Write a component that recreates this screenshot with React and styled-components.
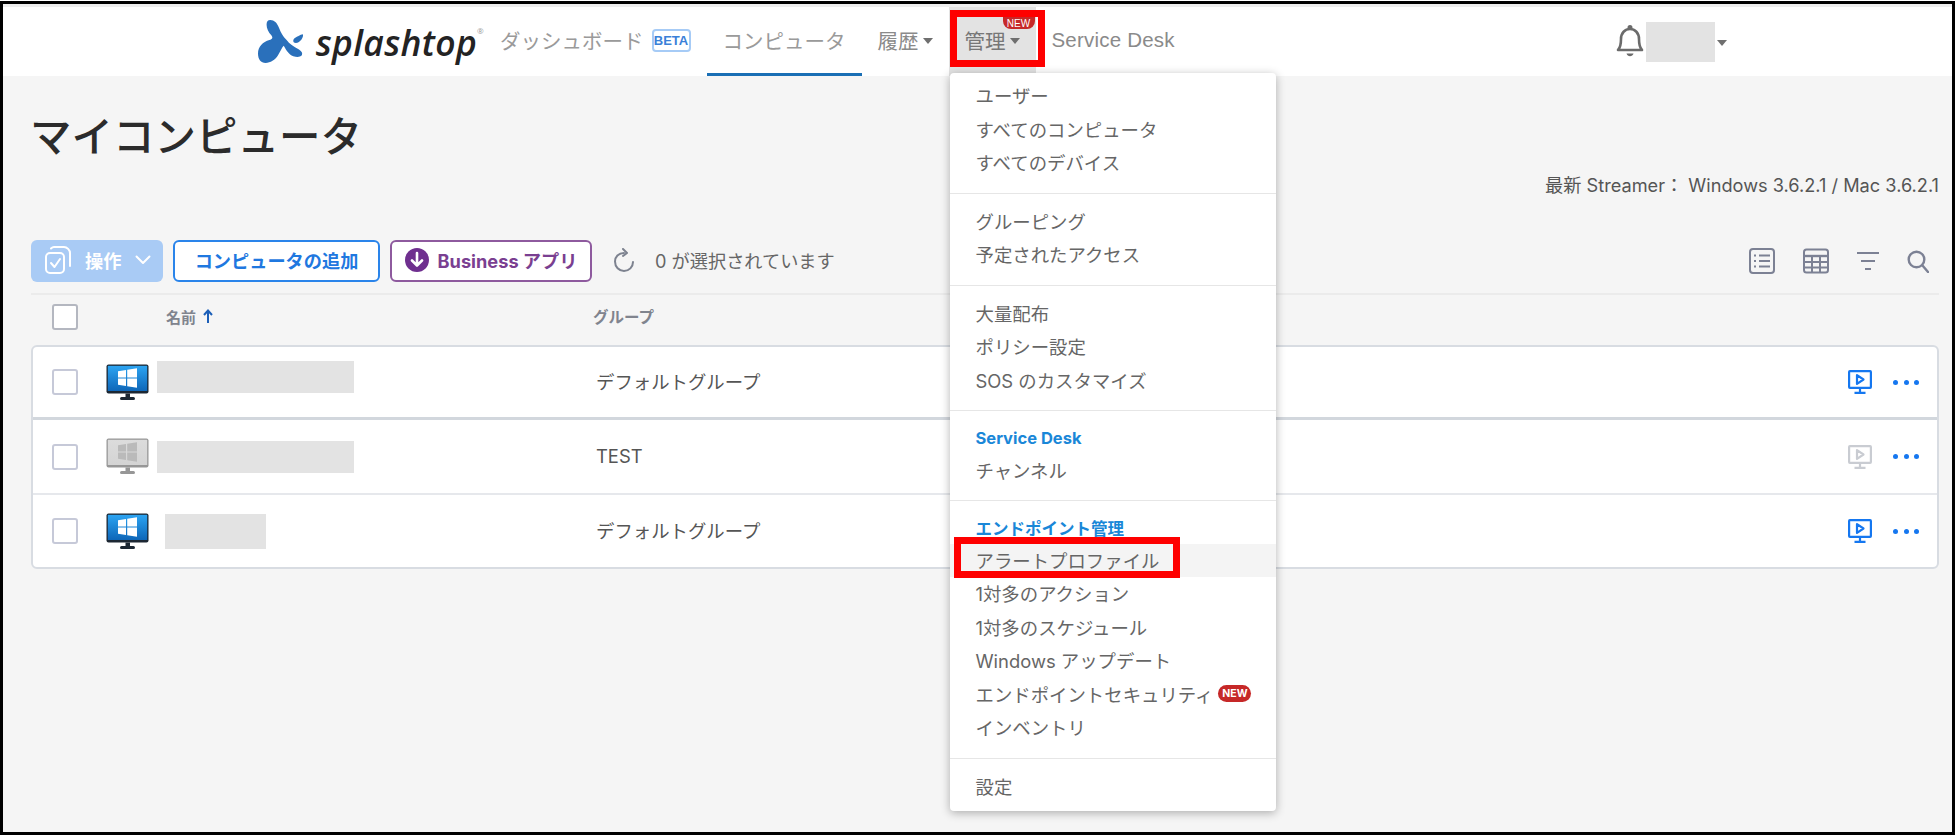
import React from "react";
import styled, { createGlobalStyle } from "styled-components";

const JP = `"Noto Sans CJK JP", sans-serif`;
const SANS = `Inter, "Noto Sans CJK JP", sans-serif`;

const GlobalStyle = createGlobalStyle`
  html, body { margin: 0; padding: 0; background: #fff; }
  * { box-sizing: border-box; }
`;

// black frame drawn around the whole capture
const Frame = styled.div`
  position: relative;
  width: 1955px;
  height: 834px;
  margin-top: 1px;
  border: 3px solid #000;
  background: #f5f5f5;
  overflow: hidden;
  font-family: ${SANS};
  color: #555;
`;

// Top navigation
const Header = styled.header`
  display: flex;
  align-items: stretch;
  height: 72px;
  padding: 0 225px 0 255px;
  background: #fff;
  border-top: 3px solid #eee;
`;

const Logo = styled.div`
  display: flex;
  align-items: center;
  gap: 12px;
  width: 226px;
  flex-shrink: 0;
`;

const LogoText = styled.span`
  font-family: "Open Sans", sans-serif;
  font-style: italic;
  font-weight: 600;
  font-size: 35.5px;
  letter-spacing: 0.3px;
  line-height: 1;
  color: #232323;
  position: relative;
  top: 1px;
`;

const LogoMark = styled.sup`
  font-size: 8px;
  color: #999;
  vertical-align: 22px;
  font-style: normal;
  font-weight: 400;
  line-height: 0;
`;

const NavItem = styled.div`
  position: relative;
  display: flex;
  align-items: center;
  gap: 4px;
  padding: 0 16px 3px;
  font-family: "Liberation Sans", ${JP};
  font-size: 20.5px;
  letter-spacing: ${(p) => p.$track || 0}px;
  color: ${(p) => p.$color || "#9a9a9a"};
  background: ${(p) => (p.$open ? "#e3e3e3" : "transparent")};
  white-space: nowrap;

  &::after {
    content: ${(p) => (p.$current ? '""' : "none")};
    position: absolute;
    left: 0;
    right: 0;
    bottom: 0;
    height: 3px;
    background: #1a6fb5;
  }
`;

const BetaBadge = styled.span`
  margin-left: 4px;
  padding: 0 4px;
  height: 23px;
  width: 39px;
  display: flex;
  align-items: center;
  justify-content: center;
  border: 2px solid #a6cbf6;
  border-radius: 4px;
  font-size: 13px;
  font-weight: 700;
  color: #3a80d8;
`;

const Caret = styled.span`
  width: 0;
  height: 0;
  margin-top: 2px;
  border-left: 5.5px solid transparent;
  border-right: 5.5px solid transparent;
  border-top: 6px solid #6f6f6f;
`;

const NewFlag = styled.span`
  position: absolute;
  top: 10px;
  right: 1px;
  width: 32px;
  height: 12px;
  display: flex;
  align-items: center;
  justify-content: center;
  background: #c62828;
  color: #fff;
  font-size: 10px;
  border-radius: 0 0 8px 8px;
`;

const Highlight = styled.span`
  position: absolute;
  left: ${(p) => p.$x}px;
  top: ${(p) => p.$y}px;
  width: ${(p) => p.$w}px;
  height: ${(p) => p.$h}px;
  border: 7px solid #fe0000;
  z-index: 6;
  pointer-events: none;
`;

const UserArea = styled.div`
  margin-left: auto;
  display: flex;
  align-items: center;
  gap: 2px;
`;

const Redacted = styled.div`
  width: ${(p) => p.$w}px;
  height: ${(p) => p.$h}px;
  margin-bottom: ${(p) => p.$lift || 0}px;
  margin-left: ${(p) => p.$indent || 0}px;
  background: #e3e3e3;
`;

// Dropdown
const Menu = styled.div`
  position: absolute;
  left: 1px;
  top: 66px;
  width: 326px;
  height: 738px;
  background: #fff;
  border-radius: 4px;
  box-shadow: 0 2px 10px rgba(0, 0, 0, 0.3);
  z-index: 5;
  font-family: ${SANS};
  letter-spacing: 0;
`;

const MenuGroup = styled.div`
  padding: ${(p) => p.$top || 11}px 0 ${(p) => p.$bottom || 13}px;
  border-bottom: ${(p) => (p.$last ? "none" : "1px solid #e6e6e6")};
`;

const MenuItem = styled.div`
  position: relative;
  display: flex;
  align-items: center;
  height: 33.5px;
  padding: 0 0 1px 26px;
  font-size: 18.4px;
  color: #666;
  background: ${(p) => (p.$active ? "#f4f4f4" : "transparent")};
`;

const MenuHeading = styled.div`
  display: flex;
  align-items: center;
  height: 31.5px;
  padding-left: 26px;
  font-size: 16.5px;
  font-weight: 700;
  color: #1a87d8;
`;

const NewPill = styled.span`
  margin-left: 5px;
  width: 33px;
  height: 17px;
  display: flex;
  align-items: center;
  justify-content: center;
  border-radius: 9px;
  background: #c62828;
  color: #fff;
  font-size: 10.5px;
  font-weight: 700;
`;

// Page body
const Main = styled.main`
  padding: 35px 13px 0 28px;
`;

const Title = styled.h1`
  margin: 0 0 0 -1px;
  font-family: ${JP};
  font-size: 41.5px;
  font-weight: 500;
  line-height: 46px;
  color: #2b2b2b;
`;

const Versions = styled.div`
  margin-top: 16px;
  height: 24px;
  line-height: 24px;
  font-size: 18.2px;
  text-align: right;
  color: #555;
`;

const Toolbar = styled.div`
  display: flex;
  align-items: center;
  height: 55px;
  margin-top: 43px;
  padding-bottom: 11px;
  border-bottom: 2px solid #ebebeb;
`;

const BaseButton = styled.div`
  display: flex;
  align-items: center;
  height: 42px;
  margin-right: 10px;
  padding-bottom: 2px;
  border-radius: 6px;
  font-size: 18.2px;
  font-weight: 700;
`;

const ActionsButton = styled(BaseButton)`
  width: 132px;
  padding-left: 14px;
  gap: 14px;
  background: #a9cbf5;
  color: #fff;
`;

const OutlineButton = styled(BaseButton)`
  width: ${(p) => p.$w}px;
  justify-content: center;
  gap: 9px;
  background: #fff;
  color: ${(p) => p.$color};
  border: 2px solid ${(p) => p.$border};
`;

const Selected = styled.div`
  display: flex;
  align-items: center;
  gap: 20px;
  margin-left: 11px;
  padding-bottom: 2px;
  font-size: 18.2px;
  color: #666;
`;

const ToolIcons = styled.div`
  margin-left: auto;
  display: flex;
  align-items: center;
  gap: 28px;
  padding-right: 10px;
`;

const ListHead = styled.div`
  display: flex;
  align-items: center;
  height: 50px;
  padding: 0 0 6px 21px;
`;

const Check = styled.span`
  display: block;
  flex-shrink: 0;
  width: 26px;
  height: 26px;
  background: #fff;
  border: 2px solid ${(p) => (p.$head ? "#b4b7c0" : "#c6c9d8")};
  border-radius: 3px;
`;

const HeadName = styled.div`
  display: flex;
  align-items: center;
  gap: 7px;
  width: 427px;
  margin-left: 88px;
  padding-bottom: 2px;
  font-size: 15px;
  font-weight: 700;
  color: #80848e;
`;

const HeadGroup = styled.div`
  padding-bottom: 2px;
  font-size: 15.5px;
  font-weight: 700;
  color: #80848e;
`;

const Card = styled.div`
  background: #fff;
  border: 2px solid #d8dce2;
  border-radius: 6px;
`;

const Row = styled.div`
  display: flex;
  align-items: center;
  height: ${(p) => p.$h}px;
  padding: 0 18px 0 19px;
  border-bottom: ${(p) => p.$line || "none"};
`;

const MonitorWrap = styled.div`
  display: flex;
  margin-left: 28px;
`;

const NameCell = styled.div`
  display: flex;
  align-items: center;
  width: 447px;
  padding-left: 8px;
`;

const GroupCell = styled.div`
  flex: 1;
  padding-bottom: 2px;
  font-size: 18.4px;
  color: #555;
`;

const RowActions = styled.div`
  display: flex;
  align-items: center;
  gap: 21px;
`;

const Dots = styled.div`
  display: flex;
  gap: 5.5px;
  span {
    width: 5px;
    height: 5px;
    border-radius: 50%;
    background: #1577f0;
  }
`;

const SplashMark = () => (
  <svg width="48" height="45" viewBox="0 0 48 45">
    <path
      fill="#2a70bb"
      d="M13 0C17 0 20 3 22 8C24 13 26 17 30 21C33 25 37 28 43 31C46 33 47 35 46 37C44 39 41 39 37 38C32 36 30 32 27 27C25 29 24 32 21 37C18 42 13 45 8 45C3 45 0 41 0 35C0 28 5 23 12 21C15 20 16 19 14 16C11 13 9 9 9 5C9 2 10 0 13 0Z"
    />
    <path fill="#2a70bb" d="M47 15C48 17 46 21 43 23C40 25 37 24 37 22C37 19 40 18 42 17C44 16 46 15 47 15Z" />
  </svg>
);

const BellIcon = () => (
  <svg width="28" height="33" viewBox="0 0 28 33" fill="none" stroke="#6b6b6b" strokeWidth="2.6">
    <path d="M2 25C5 22 5 18 5 14C5 8 9 4 14 4C19 4 23 8 23 14C23 18 23 22 26 25Z" strokeLinejoin="round" />
    <circle cx="14" cy="2.6" r="1.2" fill="#6b6b6b" />
    <path d="M10.5 28.5C11.5 32 16.5 32 17.5 28.5Z" fill="#6b6b6b" stroke="none" />
  </svg>
);

const ActionsIcon = () => (
  <svg width="26" height="28" viewBox="0 0 26 28" fill="none" stroke="#fff" strokeWidth="2" strokeLinecap="round" strokeLinejoin="round">
    <rect x="1" y="7" width="18" height="20" rx="4" />
    <path d="M6 2.5C7 1.5 8 1 9 1H19C22 1 25 4 25 7V20" />
    <path d="M6 17L9.5 21L15 13" />
  </svg>
);

const Chevron = () => (
  <svg width="16" height="10" viewBox="0 0 16 10" fill="none" stroke="#fff" strokeWidth="2" strokeLinecap="round" strokeLinejoin="round">
    <path d="M1.5 1.5L8 8L14.5 1.5" />
  </svg>
);

const DownloadCircle = () => (
  <svg width="24" height="24" viewBox="0 0 24 24">
    <circle cx="12" cy="12" r="12" fill="#6f2f8f" />
    <path d="M12 5V17M7 12.5L12 17.5L17 12.5" fill="none" stroke="#fff" strokeWidth="2.6" strokeLinecap="round" strokeLinejoin="round" />
  </svg>
);

const RefreshIcon = () => (
  <svg width="22" height="24" viewBox="0 0 22 24" fill="none" stroke="#7d828f" strokeWidth="2" strokeLinecap="round" strokeLinejoin="round">
    <path d="M11 5C5.5 5 2 9 2 13.5C2 19 6 23 11 23C16 23 20 19 20 14" />
    <path d="M10 1L14 5L10 8" />
  </svg>
);

const ListViewIcon = () => (
  <svg width="26" height="26" viewBox="0 0 26 26" fill="none" stroke="#7c8194" strokeWidth="2">
    <rect x="1" y="1" width="24" height="24" rx="3" />
    <path d="M10 7.5H21M10 13H21M10 18.5H21M5 7.5H7M5 13H7M5 18.5H7" />
  </svg>
);

const TableViewIcon = () => (
  <svg width="26" height="26" viewBox="0 0 26 26" fill="none" stroke="#7c8194" strokeWidth="2">
    <rect x="1" y="1.5" width="24" height="23" rx="2.5" />
    <path d="M1 8H25" strokeWidth="2.4" />
    <path d="M1 14H25M1 19.5H25M9 8V25M17 8V25" />
  </svg>
);

const FilterIcon = () => (
  <svg width="22" height="20" viewBox="0 0 22 20" fill="none" stroke="#7c8194" strokeWidth="2.2">
    <path d="M0 2H22M4 10H18M8 18H14" />
  </svg>
);

const SearchIcon = () => (
  <svg width="22" height="23" viewBox="0 0 22 23" fill="none" stroke="#7c8194" strokeWidth="2.4" strokeLinecap="round">
    <circle cx="9.5" cy="9.5" r="7.8" />
    <path d="M15.5 15.5L21 22" />
  </svg>
);

const SortArrow = () => (
  <svg width="10" height="14" viewBox="0 0 10 14" fill="none" stroke="#1c5fb8" strokeWidth="2">
    <path d="M5 14V2M1 6L5 1.5L9 6" />
  </svg>
);

const MonitorIcon = ({ online }) => {
  const gid = online ? "screenOn" : "screenOff";
  const body = online ? "#1c2733" : "#979797";
  return (
    <svg width="43" height="37" viewBox="0 0 43 37">
      <defs>
        <linearGradient id={gid} x1="0" y1="0" x2="0" y2="1">
          <stop offset="0" stopColor={online ? "#2ca4f2" : "#dcdcdc"} />
          <stop offset="1" stopColor={online ? "#0e66b8" : "#d4d4d4"} />
        </linearGradient>
      </defs>
      <rect x="0.5" y="0.5" width="42" height="29" rx="2" fill={body} />
      <rect x="1.8" y="1.8" width="39.4" height="25.2" fill={`url(#${gid})`} />
      <path d="M19.5 29.5H24V33H19.5Z" fill={body} />
      <rect x="14" y="33" width="15" height="3" rx="1.5" fill={body} />
      <g fill={online ? "#fff" : "#bababa"}>
        <path d="M12 7.2L20 6V13.4H12Z" />
        <path d="M21.2 5.8L31 4.3V13.4H21.2Z" />
        <path d="M12 14.6H20V22L12 20.8Z" />
        <path d="M21.2 14.6H31V23.7L21.2 22.2Z" />
      </g>
    </svg>
  );
};

const RemoteIcon = ({ color }) => (
  <svg width="24" height="24" viewBox="0 0 24 24" fill="none" stroke={color} strokeWidth="2.2">
    <rect x="1.1" y="1.1" width="21.8" height="16.8" rx="0.8" />
    <path d="M9 5.2L15.5 9.5L9 13.8Z" strokeLinejoin="round" />
    <path d="M12 18V22M6.5 22.8H17.5" />
  </svg>
);

const rows = [
  { h: 73, line: "3px solid #d2d7dd", online: true, group: "デフォルトグループ", w: 197, bh: 32, lift: 10, indent: 0 },
  { h: 75, line: "2px solid #e6e8ec", online: false, group: "TEST", w: 197, bh: 32, lift: 0, indent: 0 },
  { h: 72, line: "none", online: true, group: "デフォルトグループ", w: 101, bh: 35, lift: 0, indent: 8 },
];

export default function App() {
  return (
    <Frame>
      <GlobalStyle />
      <Header>
        <Logo>
          <SplashMark />
          <LogoText>
            splashtop<LogoMark>®</LogoMark>
          </LogoText>
        </Logo>
        <NavItem>
          ダッシュボード <BetaBadge>BETA</BetaBadge>
        </NavItem>
        <NavItem $current>コンピュータ</NavItem>
        <NavItem $color="#8a8a8a">
          履歴
          <Caret />
        </NavItem>
        <NavItem $open $color="#777">
          管理
          <Caret />
          <NewFlag>NEW</NewFlag>
          <Highlight $x={1} $y={3} $w={95} $h={57} />
          <Menu>
            <MenuGroup $top={6}>
              <MenuItem>ユーザー</MenuItem>
              <MenuItem>すべてのコンピュータ</MenuItem>
              <MenuItem>すべてのデバイス</MenuItem>
            </MenuGroup>
            <MenuGroup>
              <MenuItem>グルーピング</MenuItem>
              <MenuItem>予定されたアクセス</MenuItem>
            </MenuGroup>
            <MenuGroup>
              <MenuItem>大量配布</MenuItem>
              <MenuItem>ポリシー設定</MenuItem>
              <MenuItem>SOS のカスタマイズ</MenuItem>
            </MenuGroup>
            <MenuGroup>
              <MenuHeading>Service Desk</MenuHeading>
              <MenuItem>チャンネル</MenuItem>
            </MenuGroup>
            <MenuGroup>
              <MenuHeading>エンドポイント管理</MenuHeading>
              <MenuItem $active>
                アラートプロファイル
                <Highlight $x={4} $y={-7} $w={226} $h={41} />
              </MenuItem>
              <MenuItem>1対多のアクション</MenuItem>
              <MenuItem>1対多のスケジュール</MenuItem>
              <MenuItem>Windows アップデート</MenuItem>
              <MenuItem>
                エンドポイントセキュリティ
                <NewPill>NEW</NewPill>
              </MenuItem>
              <MenuItem>インベントリ</MenuItem>
            </MenuGroup>
            <MenuGroup $last>
              <MenuItem>設定</MenuItem>
            </MenuGroup>
          </Menu>
        </NavItem>
        <NavItem $color="#8a8a8a" $track={0.2}>Service Desk</NavItem>
        <UserArea>
          <BellIcon />
          <Redacted $w={69} $h={40} />
          <Caret />
        </UserArea>
      </Header>

      <Main>
        <Title>マイコンピュータ</Title>
        <Versions>最新 Streamer： Windows 3.6.2.1 / Mac 3.6.2.1</Versions>
        <Toolbar>
          <ActionsButton>
            <ActionsIcon />
            操作
            <Chevron />
          </ActionsButton>
          <OutlineButton $w={207} $color="#1f78e0" $border="#2a84ea">
            コンピュータの追加
          </OutlineButton>
          <OutlineButton $w={202} $color="#7a3f91" $border="#8e5a9e">
            <DownloadCircle />
            Business アプリ
          </OutlineButton>
          <Selected>
            <RefreshIcon />
            0 が選択されています
          </Selected>
          <ToolIcons>
            <ListViewIcon />
            <TableViewIcon />
            <FilterIcon />
            <SearchIcon />
          </ToolIcons>
        </Toolbar>

        <ListHead>
          <Check $head />
          <HeadName>
            名前
            <SortArrow />
          </HeadName>
          <HeadGroup>グループ</HeadGroup>
        </ListHead>

        <Card>
          {rows.map((r, i) => (
            <Row key={i} $h={r.h} $line={r.line}>
              <Check />
              <MonitorWrap>
                <MonitorIcon online={r.online} />
              </MonitorWrap>
              <NameCell>
                <Redacted $w={r.w} $h={r.bh} $lift={r.lift} $indent={r.indent} />
              </NameCell>
              <GroupCell>{r.group}</GroupCell>
              <RowActions>
                <RemoteIcon color={r.online ? "#1577f0" : "#c9ccd2"} />
                <Dots>
                  <span />
                  <span />
                  <span />
                </Dots>
              </RowActions>
            </Row>
          ))}
        </Card>
      </Main>
    </Frame>
  );
}
